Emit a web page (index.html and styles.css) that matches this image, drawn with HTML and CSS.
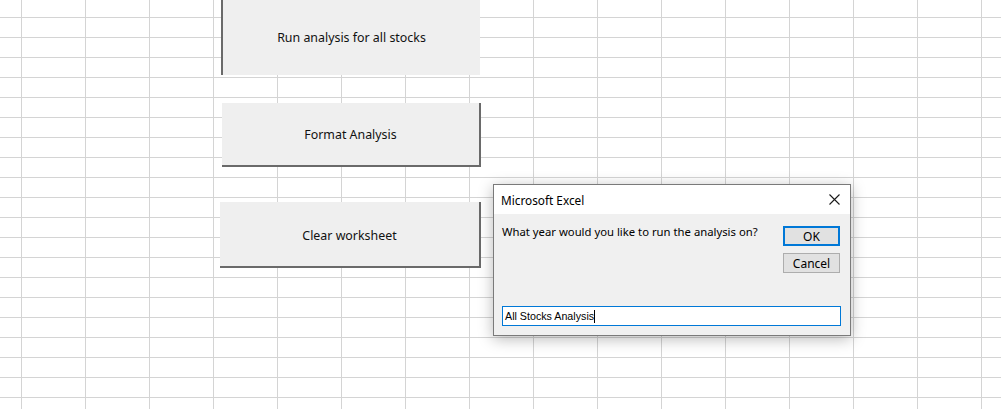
FILE: index.html
```html
<!DOCTYPE html>
<html>
<head>
<meta charset="utf-8">
<link rel="stylesheet" href="styles.css">
</head>
<body>
<div class="sheet">
  <div class="shapes">
    <div class="xbtn btn-run">Run analysis for all stocks</div>
    <div class="xbtn btn-format">Format Analysis</div>
    <div class="xbtn btn-clear">Clear worksheet</div>
  </div>
  <div class="dialog">
    <div class="titlebar">
      <span class="title">Microsoft Excel</span>
      <svg class="close" width="11" height="11" viewBox="0 0 11 11"><path d="M0.5 0.5 L10.5 10.5 M10.5 0.5 L0.5 10.5" stroke="#1a1a1a" stroke-width="1.1" fill="none"/></svg>
    </div>
    <div class="body">
      <div class="row">
        <div class="prompt">What year would you like to run the analysis on?</div>
        <div class="actions">
          <div class="dbtn ok">OK</div>
          <div class="dbtn cancel">Cancel</div>
        </div>
      </div>
      <div class="input"><span>All Stocks Analysis</span><span class="caret"></span></div>
    </div>
  </div>
</div>
</body>
</html>
```
FILE: styles.css
```css
html, body {
  margin: 0;
  padding: 0;
}
body {
  width: 1001px;
  height: 409px;
  overflow: hidden;
  background-color: #ffffff;
  background-image:
    linear-gradient(to right, #d4d4d4 1px, transparent 1px),
    linear-gradient(to bottom, #d4d4d4 1px, transparent 1px);
  background-size: 64px 20px, 64px 20px;
  background-position: 21px 0, 0 17px;
}
.sheet {
  position: relative;
  width: 1001px;
  height: 409px;
  font-family: "Noto Sans", "Open Sans", sans-serif;
}
.shapes {
  display: flex;
  flex-direction: column;
  align-items: flex-start;
}
.xbtn {
  display: flex;
  align-items: center;
  justify-content: center;
  background: #efefef;
  color: #111;
  font-size: 12.4px;
  box-sizing: border-box;
}
.btn-run {
  margin-left: 221px;
  width: 259px;
  height: 75px;
  border-left: 2px solid #6a6a6a;
  padding-bottom: 1px;
}
.btn-format {
  margin-left: 222px;
  margin-top: 28px;
  width: 259px;
  height: 64px;
  padding-top: 1px;
  border-right: 2px solid #6a6a6a;
  border-bottom: 2px solid #6a6a6a;
}
.btn-clear {
  margin-left: 220px;
  margin-top: 35px;
  width: 261px;
  height: 66px;
  padding-top: 2px;
  border-right: 2px solid #6a6a6a;
  border-bottom: 2px solid #6a6a6a;
}
.dialog {
  position: absolute;
  left: 493px;
  top: 184px;
  width: 358px;
  height: 152px;
  box-sizing: border-box;
  border: 1px solid #7a7a7a;
  background: #f0f0f0;
  box-shadow: 0 3px 14px rgba(0, 0, 0, 0.28);
  display: flex;
  flex-direction: column;
}
.titlebar {
  height: 29px;
  background: #ffffff;
  display: flex;
  align-items: center;
  justify-content: space-between;
  padding: 0 10px 0 7px;
}
.title {
  font-size: 11.8px;
  color: #000;
}
.close {
  display: block;
}
.body {
  flex: 1;
  display: flex;
  flex-direction: column;
  padding: 0 9px 0 8px;
}
.row {
  display: flex;
  justify-content: space-between;
  align-items: flex-start;
}
.prompt {
  font-size: 11.3px;
  color: #000;
  margin-top: 10px;
}
.actions {
  display: flex;
  flex-direction: column;
  gap: 7px;
  margin-top: 12px;
  margin-right: 1px;
}
.dbtn {
  width: 57px;
  height: 20px;
  box-sizing: border-box;
  background: #e1e1e1;
  font-size: 12px;
  color: #000;
  display: flex;
  align-items: center;
  justify-content: center;
}
.ok {
  border: 2px solid #0078d7;
}
.cancel {
  border: 1px solid #adadad;
}
.input {
  margin-top: 33px;
  height: 20px;
  box-sizing: border-box;
  border: 1px solid #0078d7;
  background: #fff;
  display: flex;
  align-items: center;
  padding-left: 2px;
  font-family: "Liberation Sans", Arial, sans-serif;
  font-size: 10.7px;
  color: #000;
}
.caret {
  display: inline-block;
  width: 1px;
  height: 13px;
  background: #000;
}
```
